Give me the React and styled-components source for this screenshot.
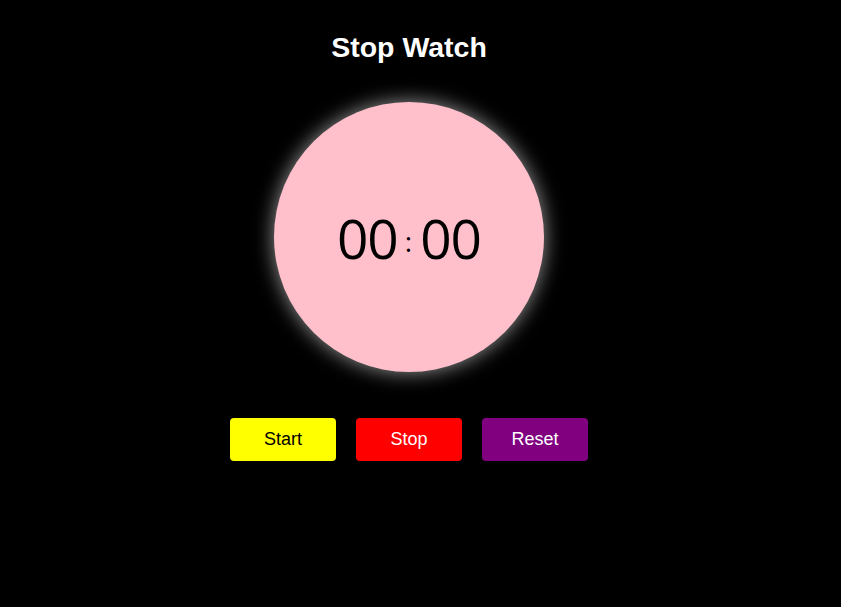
import React from 'react';
import styled, { createGlobalStyle } from 'styled-components';

const GlobalStyle = createGlobalStyle`
  body {
    margin: 0;
    background: #000;
    font-family: "Liberation Sans", Arial, sans-serif;
  }
`;

const Page = styled.div`
  width: 818px;
  min-height: 607px;
  display: flex;
  flex-direction: column;
  align-items: center;
  padding-top: 32px;
  box-sizing: border-box;
`;

const Title = styled.h1`
  margin: 0;
  color: #fff;
  font-size: 28.5px;
  font-weight: bold;
  line-height: 30px;
`;

const Dial = styled.div`
  width: 270px;
  height: 270px;
  margin-top: 40px;
  border-radius: 50%;
  background: pink;
  box-shadow: 0 0 20px rgba(255, 255, 255, 0.6);
  display: flex;
  align-items: center;
  justify-content: center;
`;

const Digits = styled.span`
  font-family: "Open Sans", "Noto Sans", sans-serif;
  font-size: 55px;
  letter-spacing: -1px;
  line-height: 1;
  color: #000;
`;

const Colon = styled.span`
  font-family: "Open Sans", "Noto Sans", sans-serif;
  font-size: 28px;
  line-height: 1;
  margin: 8px 8px 0 7px;
  color: #000;
`;

const Controls = styled.div`
  display: flex;
  gap: 20px;
  margin-top: 46px;
`;

const Button = styled.button`
  width: 106px;
  height: 43px;
  border: none;
  border-radius: 4px;
  background: ${({ bg }) => bg};
  color: ${({ fg }) => fg};
  font-family: "Liberation Sans", Arial, sans-serif;
  font-size: 18px;
  cursor: pointer;
`;

const App = () => {
  return (
    <>
      <GlobalStyle />
      <Page>
        <Title>Stop Watch</Title>
        <Dial>
          <Digits>00</Digits>
          <Colon>:</Colon>
          <Digits>00</Digits>
        </Dial>
        <Controls>
          <Button bg="yellow" fg="#000">Start</Button>
          <Button bg="red" fg="#fff">Stop</Button>
          <Button bg="purple" fg="#fff">Reset</Button>
        </Controls>
      </Page>
    </>
  );
};

export default App;
